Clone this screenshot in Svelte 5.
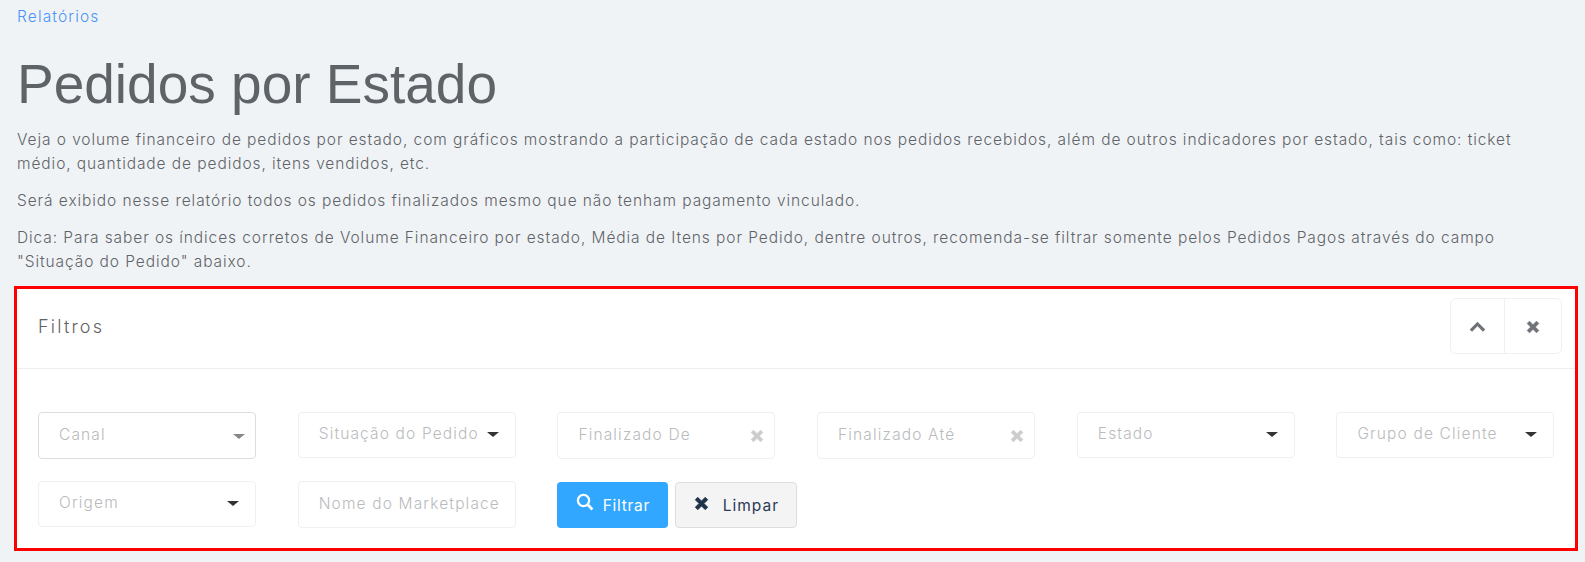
<script lang="ts">
	const intro = [
		['Veja o volume financeiro de pedidos por estado, com gráficos mostrando a participação de cada estado nos pedidos recebidos, além de outros indicadores por estado, tais como: ticket', 'médio, quantidade de pedidos, itens vendidos, etc.'],
		['Será exibido nesse relatório todos os pedidos finalizados mesmo que não tenham pagamento vinculado.'],
		['Dica: Para saber os índices corretos de Volume Financeiro por estado, Média de Itens por Pedido, dentre outros, recomenda-se filtrar somente pelos Pedidos Pagos através do campo', '"Situação do Pedido" abaixo.']
	];

	const rowOne = [
		{ label: 'Canal', kind: 'canal' },
		{ label: 'Situação do Pedido', kind: 'select' },
		{ label: 'Finalizado De', kind: 'date' },
		{ label: 'Finalizado Até', kind: 'date' },
		{ label: 'Estado', kind: 'select' },
		{ label: 'Grupo de Cliente', kind: 'select' }
	];
</script>

{#snippet times(size, color)}
	<svg width={size} height={size} viewBox="0 0 12 12" aria-hidden="true">
		<path d="M1 3 3 1 6 4 9 1 11 3 8 6 11 9 9 11 6 8 3 11 1 9 4 6Z" fill={color} stroke={color} stroke-width="0.6" stroke-linejoin="round" />
	</svg>
{/snippet}

<div class="page">
	<a class="crumb" href="#relatorios">Relatórios</a>
	<h1>Pedidos por Estado</h1>

	{#each intro as lines}
		<p>
			{#each lines as line, i}
				{#if i > 0}<br />{/if}{line}
			{/each}
		</p>
	{/each}

	<section class="card">
		<header>
			<h2>Filtros</h2>
			<div class="tools">
				<button type="button" aria-label="Recolher">
					<svg width="17" height="12" viewBox="0 0 16 11" aria-hidden="true">
						<path d="M1.8 9 8 2.6 14.2 9" fill="none" stroke="#6f7276" stroke-width="3" />
					</svg>
				</button>
				<button type="button" aria-label="Fechar">
					{@render times(14, '#6f7276')}
				</button>
			</div>
		</header>

		<div class="filters">
			{#each rowOne as f}
				<div class="field {f.kind}">
					<span class="label">{f.label}</span>
					{#if f.kind === 'date'}
						<span class="clear">{@render times(14, '#cccccc')}</span>
					{:else}
						<span class="caret"></span>
					{/if}
				</div>
			{/each}

			<div class="field select">
				<span class="label">Origem</span>
				<span class="caret"></span>
			</div>
			<div class="field input">
				<span class="label">Nome do Marketplace</span>
			</div>
			<div class="actions">
				<button type="button" class="btn primary">
					<svg class="lift-search" width="18" height="18" viewBox="0 0 18 18" aria-hidden="true">
						<circle cx="7.5" cy="7.5" r="5.6" fill="none" stroke="#fff" stroke-width="2.3" />
						<path d="M11.8 11.8 16.4 16.4" stroke="#fff" stroke-width="2.8" />
					</svg>
					Filtrar
				</button>
				<button type="button" class="btn plain">
					<span class="lift-x">{@render times(15, '#1d3349')}</span>
					<span>Limpar</span>
				</button>
			</div>
		</div>
	</section>
</div>

<style>
	:global(body) {
		background: #f0f3f6;
	}

	.page {
		height: 562px;
		box-sizing: border-box;
		padding: 5px 7px 0 14px;
		font-family: Inter, 'Open Sans', sans-serif;
		font-size: 15.5px;
		font-weight: 300;
		letter-spacing: 0.92px;
		line-height: 24px;
		color: #5f6468;
		overflow: hidden;
	}

	.crumb {
		display: block;
		margin-left: 3px;
		letter-spacing: 1.15px;
		color: #4a94f5;
		text-decoration: none;
	}

	h1 {
		margin: 22px 0 11px 3px;
		font-family: 'Liberation Sans', Arial, sans-serif;
		font-size: 55px;
		font-weight: 400;
		letter-spacing: 0;
		line-height: 66px;
		color: #5e6367;
	}

	p {
		margin: 0 0 13px 3px;
		white-space: nowrap;
	}

	.card {
		margin-top: -1px;
		height: 265px;
		box-sizing: border-box;
		border: 3px solid #ff0000;
		background: #fff;
	}

	header {
		display: flex;
		align-items: center;
		justify-content: space-between;
		height: 79px;
		padding: 0 13px 0 21px;
		border-bottom: 1px solid #eceeef;
	}

	h2 {
		margin: 0 0 4px;
		font-size: 18px;
		font-weight: 300;
		letter-spacing: 2.2px;
	}

	.tools {
		display: flex;
		height: 54px;
		margin-bottom: 5px;
		border: 1px solid #eff0f1;
		border-radius: 6px;
	}

	.tools button {
		width: 53px;
		padding: 2px 0 0;
		border: 0;
		background: none;
		display: flex;
		align-items: center;
		justify-content: center;
	}

	.tools button + button {
		width: 57px;
		border-left: 1px solid #eff0f1;
	}

	.filters {
		display: grid;
		grid-template-columns: repeat(6, 218px);
		grid-auto-rows: 46px;
		column-gap: 41.7px;
		row-gap: 23px;
		padding: 43px 0 0 21px;
	}

	.field {
		display: flex;
		align-items: center;
		justify-content: space-between;
		height: 46px;
		box-sizing: border-box;
		padding: 0 16px 0 20px;
		border: 1px solid #eff0f1;
		border-radius: 4px;
		letter-spacing: 1.15px;
		color: #b9bbbd;
		white-space: nowrap;
	}

	.label {
		margin-top: -2px;
	}

	.field.canal {
		height: 47px;
		border-color: #dcdddf;
		padding-right: 10px;
	}

	.field.date {
		height: 47px;
		padding-right: 10px;
	}

	.field.input {
		height: 47px;
		padding-right: 0;
	}

	.caret {
		width: 0;
		height: 0;
		margin-top: -2px;
		border-style: solid;
		border-width: 5px 6px 0;
		border-color: #333 transparent transparent;
	}

	.canal .caret {
		border-top-color: #888;
		margin-top: 2px;
	}

	.clear {
		display: flex;
	}

	.actions {
		display: flex;
		align-items: flex-start;
		gap: 7px;
		margin-top: 1px;
	}

	.btn {
		display: flex;
		flex: none;
		align-items: center;
		justify-content: center;
		height: 46px;
		box-sizing: border-box;
		font-family: inherit;
		font-size: 15.5px;
		font-weight: 400;
		letter-spacing: 0.7px;
		border-radius: 4px;
		padding: 0;
	}

	.primary {
		width: 111px;
		gap: 9px;
		border: 0;
		background: #31a7ff;
		color: #fff;
	}

	.lift-search {
		margin-top: -6px;
	}

	.plain {
		width: 122px;
		gap: 14px;
		border: 1px solid #dcdddf;
		background: #f4f4f5;
		color: #2b3a55;
		letter-spacing: 1px;
	}

	.lift-x {
		display: flex;
		margin-top: -4px;
	}
</style>
